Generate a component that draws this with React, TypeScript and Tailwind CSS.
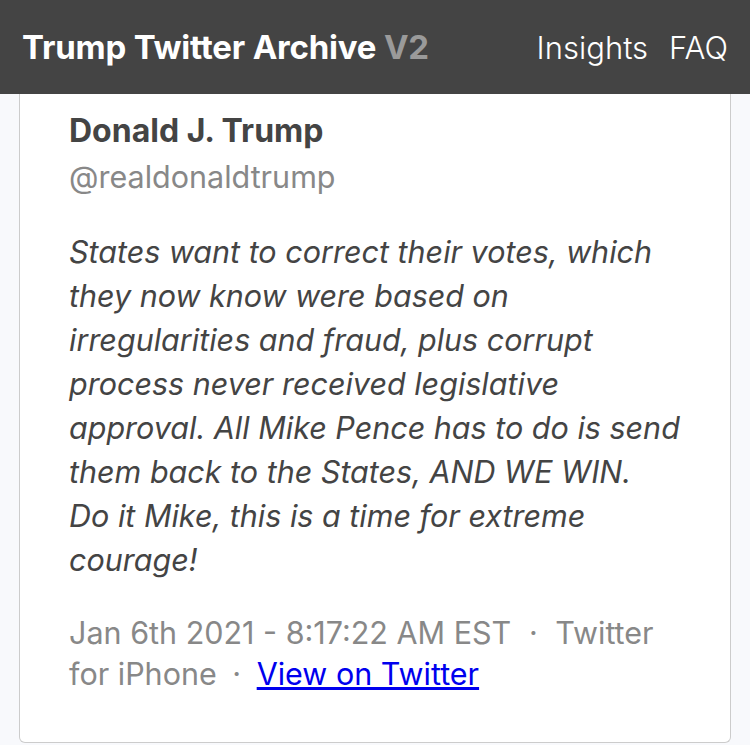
import React from "react";

export default function App() {
  return (
    <div className="w-[750px] h-[745px] overflow-hidden bg-[#f8f9fc]" style={{ fontFamily: "Inter, 'Noto Sans', sans-serif" }}>
      <header className="h-[94px] bg-[#444444] flex items-center justify-between pl-[22px] pr-[22px]">
        <div className="text-[33px] font-bold text-white tracking-[-0.2px] leading-none">
          Trump Twitter Archive <span className="text-[#9a9a9a]">V2</span>
        </div>
        <nav className="flex gap-[21px] text-[31px] text-white font-light leading-none">
          <span>Insights</span>
          <span>FAQ</span>
        </nav>
      </header>
      <div className="mx-[19px] bg-white border border-t-0 border-[#cccccc] rounded-b-[6px] pl-[49px] pr-[49px] pt-[17px] pb-[48px]">
        <div className="text-[32px] font-bold text-[#444444] leading-[40px]">Donald J. Trump</div>
        <div className="text-[30.5px] text-[#888888] leading-[40px] mt-[6px]">@realdonaldtrump</div>
        <p className="mt-[33px] text-[30.5px] italic text-[#444444] leading-[44px]">
          States want to correct their votes, which they now know were based on irregularities and fraud, plus corrupt process never received legislative approval. All Mike Pence has to do is send them back to the States, AND WE WIN. <span className="whitespace-nowrap">Do it</span> Mike, this is a time for extreme courage!
        </p>
        <div className="mt-[30px] text-[30.5px] text-[#888888] leading-[41px]">
          Jan 6th 2021 - 8:17:22 AM EST <span className="mx-[9px]">·</span> Twitter for iPhone <span className="mx-[7px]">·</span>{" "}
          <a href="#" className="text-[#0000ee] underline">View on Twitter</a>
        </div>
      </div>
    </div>
  );
}
